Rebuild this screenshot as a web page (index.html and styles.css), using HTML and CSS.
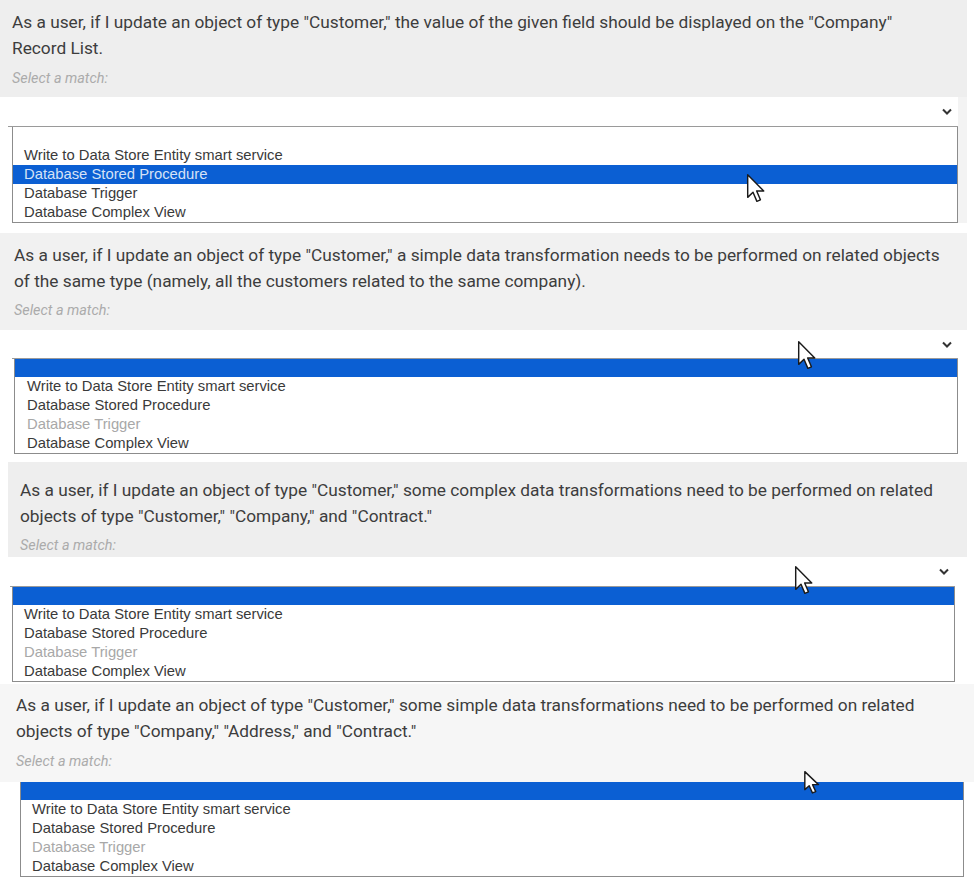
FILE: index.html
```html
<!DOCTYPE html>
<html lang="en">
<head>
<meta charset="utf-8">
<title>Select a match</title>
<link rel="stylesheet" href="styles.css">
</head>
<body>
<main class="page">

  <section class="q q1">
    <div class="head">
      <p class="prompt">As a user, if I update an object of type "Customer," the value of the given field should be displayed on the "Company" Record List.</p>
      <div class="hint">Select a match:</div>
    </div>
    <div class="select"><svg class="chev" width="10" height="7" viewBox="0 0 10 7"><polyline points="1,1.5 5,5.5 9,1.5" fill="none" stroke="#333" stroke-width="2"/></svg></div>
    <ul class="list">
      <li class="opt empty"></li>
      <li class="opt">Write to Data Store Entity smart service</li>
      <li class="opt sel">Database Stored Procedure</li>
      <li class="opt">Database Trigger</li>
      <li class="opt">Database Complex View</li>
    </ul>
    <svg class="cursor" width="20" height="31" viewBox="0 0 18 28"><path d="M1.5 1.5 L1.5 22 L6.3 17.4 L9.8 25.6 L13 24.2 L9.6 16.2 L16 16.2 Z" fill="#fff" stroke="#1a1a1a" stroke-width="1.3" stroke-linejoin="round"/></svg>
  </section>

  <section class="q q2">
    <div class="head">
      <p class="prompt">As a user, if I update an object of type "Customer," a simple data transformation needs to be performed on related objects of the same type (namely, all the customers related to the same company).</p>
      <div class="hint">Select a match:</div>
    </div>
    <div class="select"><svg class="chev" width="10" height="7" viewBox="0 0 10 7"><polyline points="1,1.5 5,5.5 9,1.5" fill="none" stroke="#333" stroke-width="2"/></svg></div>
    <ul class="list">
      <li class="opt empty sel"></li>
      <li class="opt">Write to Data Store Entity smart service</li>
      <li class="opt">Database Stored Procedure</li>
      <li class="opt dis">Database Trigger</li>
      <li class="opt">Database Complex View</li>
    </ul>
    <svg class="cursor" width="20" height="31" viewBox="0 0 18 28"><path d="M1.5 1.5 L1.5 22 L6.3 17.4 L9.8 25.6 L13 24.2 L9.6 16.2 L16 16.2 Z" fill="#fff" stroke="#1a1a1a" stroke-width="1.3" stroke-linejoin="round"/></svg>
  </section>

  <section class="q q3">
    <div class="head">
      <p class="prompt">As a user, if I update an object of type "Customer," some complex data transformations need to be performed on related objects of type "Customer," "Company," and "Contract."</p>
      <div class="hint">Select a match:</div>
    </div>
    <div class="select"><svg class="chev" width="10" height="7" viewBox="0 0 10 7"><polyline points="1,1.5 5,5.5 9,1.5" fill="none" stroke="#333" stroke-width="2"/></svg></div>
    <ul class="list">
      <li class="opt empty sel"></li>
      <li class="opt">Write to Data Store Entity smart service</li>
      <li class="opt">Database Stored Procedure</li>
      <li class="opt dis">Database Trigger</li>
      <li class="opt">Database Complex View</li>
    </ul>
    <svg class="cursor" width="20" height="31" viewBox="0 0 18 28"><path d="M1.5 1.5 L1.5 22 L6.3 17.4 L9.8 25.6 L13 24.2 L9.6 16.2 L16 16.2 Z" fill="#fff" stroke="#1a1a1a" stroke-width="1.3" stroke-linejoin="round"/></svg>
  </section>

  <section class="q q4">
    <div class="head">
      <p class="prompt">As a user, if I update an object of type "Customer," some simple data transformations need to be performed on related objects of type "Company," "Address," and "Contract."</p>
      <div class="hint">Select a match:</div>
    </div>
    <ul class="list">
      <li class="opt empty sel"></li>
      <li class="opt">Write to Data Store Entity smart service</li>
      <li class="opt">Database Stored Procedure</li>
      <li class="opt dis">Database Trigger</li>
      <li class="opt">Database Complex View</li>
    </ul>
    <svg class="cursor" width="20" height="24" viewBox="0 0 18 22"><path d="M1.5 1.5 L1.5 18 L5.5 14.5 L8.5 21 L11.5 19.8 L8.6 13.4 L14 13.4 Z" fill="#fff" stroke="#1a1a1a" stroke-width="1.3" stroke-linejoin="round"/></svg>
  </section>

</main>
</body>
</html>
```

FILE: styles.css
```css
* { box-sizing: border-box; }

html, body {
  margin: 0;
  padding: 0;
  background: #ffffff;
}

.page {
  width: 974px;
  display: flex;
  flex-direction: column;
}

.q {
  position: relative;
  display: flex;
  flex-direction: column;
}

.head {
  background: #eeeeee;
}

.prompt {
  margin: 0;
  font-family: Roboto, "Liberation Sans", sans-serif;
  font-size: 17.3px;
  line-height: 26px;
  color: #3d3d3d;
}

.hint {
  font-family: Roboto, "Liberation Sans", sans-serif;
  font-style: italic;
  font-size: 14.4px;
  line-height: 16px;
  color: #ababab;
}

.select {
  height: 30px;
  background: #ffffff;
  border-bottom: 1px solid #9a9a9a;
  display: flex;
  align-items: center;
  justify-content: flex-end;
  padding-right: 6px;
}

.chev { display: block; }

.list {
  list-style: none;
  margin: 0;
  padding: 0;
  background: #ffffff;
  border: 1px solid #8c8c8c;
  border-top: none;
  font-family: "Liberation Sans", Arial, sans-serif;
  font-size: 14.8px;
  color: #3a3a3a;
}

.opt {
  height: 19px;
  line-height: 19px;
  padding: 0 11px;
  white-space: nowrap;
}

.opt.sel {
  background: #0b5fd3;
  color: #d6e2f6;
}

.opt.dis { color: #a8a8a8; }

.cursor {
  position: absolute;
  display: block;
}

/* panel 1 */
.q1 { background: linear-gradient(to right, #ffffff 0, #ffffff 958px, #f3f3f3 958px, #f3f3f3 967px, #ffffff 967px); }
.q1 .head { padding: 9px 40px 10px 12px; margin-right: 7px; }
.q1 .hint { margin-top: 10px; }
.q1 .select { margin: 0 16px 0 8px; }
.q1 .list { margin: 0 16px 0 12px; }
.q1 .cursor { left: 746px; top: 173px; }

/* panel 2 */
.q2 { margin-top: 10px; }
.q2 .head { padding: 9px 14px 11px; margin-right: 7px; background: #f1f1f1; }
.q2 .hint { margin-top: 9px; }
.q2 .select { height: 29px; margin: 0 16px 0 12px; }
.q2 .list { margin: 0 16px 0 14px; }
.q2 .opt { padding: 0 12px; }
.q2 .opt.sel { height: 18px; }
.q2 .cursor { left: 797px; top: 107px; }

/* panel 3 */
.q3 { margin-top: 8px; }
.q3 .head { padding: 15px 12px 3px; margin: 0 7px 0 8px; }
.q3 .hint { margin-top: 9px; }
.q3 .select { margin: 0 19px 0 10px; }
.q3 .list { margin: 0 19px 0 12px; }
.q3 .opt.sel { height: 18px; }
.q3 .cursor { left: 794px; top: 103px; }

/* panel 4 */
.q4 { margin-top: 2px; }
.q4 .head { padding: 8px 16px 12px; background: #f6f6f6; }
.q4 .hint { margin-top: 10px; }
.q4 .list { margin: 0 10px 0 20px; }
.q4 .opt { padding: 0 11px; }
.q4 .opt.sel { height: 18px; }
.q4 .cursor { left: 803px; top: 86px; }
```
